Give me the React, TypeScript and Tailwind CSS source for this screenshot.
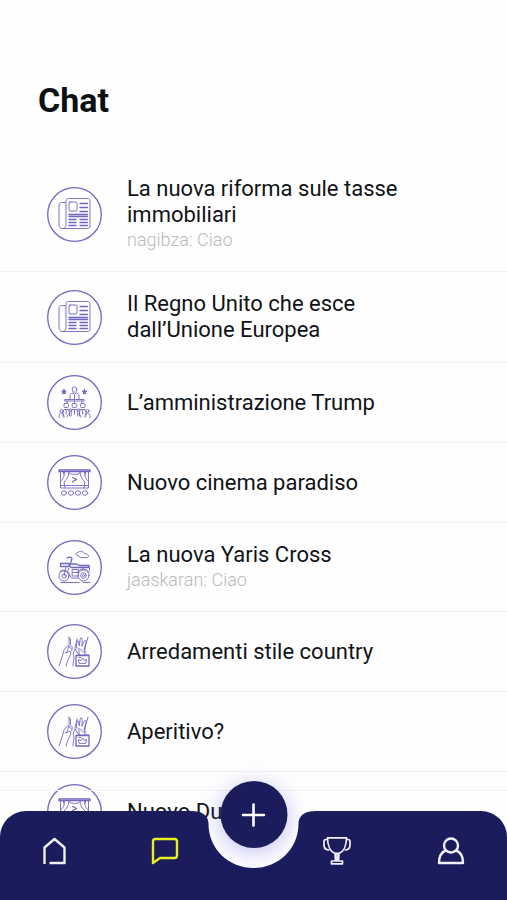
import type { ReactNode } from "react";

const NewspaperIcon = () => (
  <>
    <path d="M19 14.500c0-2 1-3 2.500-3h19c1.500 0 2.500 1 2.500 2.500v25c0 1.500-1 2.500-2.500 2.500h-25c-2 0-3.500-1.500-3.500-3.500V18c0-1.500 1-2.500 2.500-2.500H19V38c0 2-1.500 3.500-3.500 3.500" />
    <rect x="22" y="15" width="8" height="9" rx="1" />
    <path strokeWidth="1.300" d="M33 16.500h7.500M33 20.500h7.500M33 24.500h7.500M22 32.500h7M33 32.500h7.500M22 35.500h7M33 35.500h7.500M22 38.500h7M33 38.500h7.500" />
    <path strokeWidth="1.500" d="M22 27.500h18.500M22 29.500h18.500" />
  </>
);

const SpeakerIcon = () => (
  <>
    <path fill="currentColor" d="m17 14.500.7 1.500 1.600.2-1.200 1.100.3 1.700-1.400-.8-1.400.8.3-1.700-1.200-1.100 1.600-.2zM37.500 14.500l.7 1.500 1.600.2-1.200 1.100.3 1.700-1.400-.8-1.400.8.3-1.700-1.200-1.100 1.600-.2z" />
    <ellipse cx="27.500" cy="14.500" rx="2.300" ry="2.800" />
    <path d="M23 24v-3c0-2 1.500-3 3-3l1.500 1.500L29 18c1.500 0 3 1 3 3v3M27.500 20v4M18 24.500h19v1.500H18zM20 26v2.500M27.500 26v2.500M35 26v2.500" />
    <rect x="17" y="28.500" width="4.500" height="4" rx="1" />
    <rect x="25.200" y="28.500" width="4.500" height="4" rx="1" />
    <rect x="33.500" y="28.500" width="4.500" height="4" rx="1" />
    <path d="M16 41v-4l1-2.500h4.500l1 2.500v4M24.200 41v-4l1-2.500h4.500l1 2.500v4M32.500 41v-4l1-2.500H38l1 2.500v4M19.200 35v4M27.500 35v4M35.700 35v4" />
    <circle cx="14.500" cy="36" r="1.500" />
    <circle cx="23.300" cy="35" r="1.200" />
    <circle cx="31.600" cy="35" r="1.200" />
    <circle cx="40.500" cy="36" r="1.500" />
    <path d="M12 42.500c0-3 1-4.500 2.500-4.500s2.500 1.500 2.500 4.500M38 42.500c0-3 1-4.500 2.500-4.500s2.500 1.500 2.500 4.500M20 42c.5-2 1-3 2.300-3M34 42c-.5-2-1-3-2.300-3" />
  </>
);

const CinemaIcon = () => (
  <>
    <path strokeWidth="1.300" d="M12 15h31v1.700H12z" />
    <path d="M13.500 17v16h28V17M13.500 30.500h28M16.500 17v2M38.500 17v2" />
    <path d="M22 17c0 5-3 8-5 10l1 6M17.500 17c0 5-1.500 7-4 9.500M33 17c0 5 3 8 5 10l-1 6M37.500 17c0 5 1.500 7 4 9.500M22 18c2 2 9 2 11 0" />
    <path strokeWidth="1.300" d="m25.500 22.500 4 2-4 2.200" />
    <ellipse cx="17" cy="38" rx="2.600" ry="2.200" />
    <ellipse cx="24" cy="38" rx="2.600" ry="2.200" />
    <ellipse cx="31" cy="38" rx="2.600" ry="2.200" />
    <ellipse cx="38" cy="38" rx="2.600" ry="2.200" />
  </>
);

const MotorbikeIcon = () => (
  <>
    <path d="M31 15.500c-3 0-3-3 0-3 2-2 5-1.500 6 .5 1 1 4 1 4.500 2.500.3 1-.5 2-1.500 2h-6c-1.500 0-2-1-3-2z" />
    <path strokeWidth="1.300" d="M20 18c2-1.200 4.500-1.500 5 .5l-1.500 5M13.500 23.500h8.500v3h-8.500zM22 24h7c1.500 0 2 1.500 4 1.500h9v2H24z" />
    <path d="M19 26.500 17 36M22 28l-1.500 4 4 6h7M25.500 29.500h6v6.500h-6zM25.500 32.500h6M36 27.500v2M42.500 27.500v3M12.500 32c1-3 7-3 10 2M30.500 32c2-4 10-4 12 1" />
    <circle cx="17" cy="36" r="5" />
    <circle cx="17" cy="36" r="2.200" />
    <circle cx="36.500" cy="35.500" r="5.500" />
    <circle cx="36.500" cy="35.500" r="2.800" />
    <circle cx="36.500" cy="35.500" r="1" />
    <path d="M14 42.500h18M36 42.500h7" />
  </>
);

const ToastIcon = () => (
  <>
    <path d="M22 13v9.500M20.500 22c-2 2-4.500 4-4.500 8l-4 12M24.500 25l-3-3c0 4-2 6-3 7l5-2c2-1 2.500-3 1-5M24 28c0 4-4 8-5 14M22 14l1.500 1v6" />
    <path d="M29 25l1-7c0-2 1.500-2 1.800 0l.4 4 1-7c.4-1.800 2-1.500 2 .3l-.3 7 2.200-5c1-1.500 2.500-.7 2 1L37 26M41 13l-2.500 9M38.500 22l-1 6M30 15l-2 9M31 24c2 1 4 2 5 4" />
    <path d="M26 42l1-9c-1-2-1-5 1-8l4 6h10M32 26v5M38 27v4" />
    <path strokeWidth="1.300" d="M29 31.500h13v10.500H29z" />
    <path d="m32 39-.5-3.500 2.500 1 2-2.500 1.500 2.500 2-1-.5 3.500zM32 33.500h2" />
  </>
);

type Chat = { title: string; preview?: string; icon: ReactNode };

const chats: Chat[] = [
  { title: "La nuova riforma sule tasse immobiliari", preview: "nagibza: Ciao", icon: <NewspaperIcon /> },
  { title: "Il Regno Unito che esce dall’Unione Europea", icon: <NewspaperIcon /> },
  { title: "L’amministrazione Trump", icon: <SpeakerIcon /> },
  { title: "Nuovo cinema paradiso", icon: <CinemaIcon /> },
  { title: "La nuova Yaris Cross", preview: "jaaskaran: Ciao", icon: <MotorbikeIcon /> },
  { title: "Arredamenti stile country", icon: <ToastIcon /> },
  { title: "Aperitivo?", icon: <ToastIcon /> },
  { title: "Nuovo Du", icon: <CinemaIcon /> },
];

const ChatRow = ({ title, preview, icon }: Chat) => (
  <li className="border-b border-[#f3f3f5] last:border-b-0">
    <a href="#" className="flex min-h-[79px] items-center gap-[25px] pl-[47px] pr-20">
      <svg
        viewBox="0 0 55 55"
        className="w-[55px] h-[55px] shrink-0 text-[#7067bf]"
        fill="none"
        stroke="currentColor"
        strokeWidth="0.900"
        strokeLinecap="round"
        strokeLinejoin="round"
        aria-hidden="true"
      >
        <circle cx="27.500" cy="27.500" r="26.800" strokeWidth="1.300" />
        {icon}
      </svg>
      <div className="py-[19px]">
        <h2 className="text-[22px] leading-[26px] text-[#101418]">{title}</h2>
        {preview && <p className="text-lg leading-6 font-light text-[#b9b9bb]">{preview}</p>}
      </div>
    </a>
  </li>
);

const NavButton = ({ label, active, children }: { label: string; active?: boolean; children: ReactNode }) => (
  <button type="button" aria-label={label} className={active ? "text-[#e9f01d]" : "text-[#f1f0fb]"}>
    <svg viewBox="0 0 28 28" className="w-7 h-7" fill="none" stroke="currentColor" strokeWidth="2.400" strokeLinejoin="round">
      {children}
    </svg>
  </button>
);

const BottomNav = () => (
  <nav className="fixed inset-x-0 bottom-0 border-t border-[#f3f3f5] pt-5">
    {/* bar with the notch for the add button */}
    <div className="absolute inset-x-0 bottom-0 top-5 flex text-[#1b1c5c]">
      <div className="flex-1 rounded-tl-[26px] bg-current" />
      <svg viewBox="0 0 131 89" className="w-[131px] h-[89px]" fill="currentColor" aria-hidden="true">
        <path d="M0 0H3C14 0 20.500 4 20.500 13C20.500 38 41 57 65.500 57S110.500 38 110.500 13C110.500 4 117 0 128 0H131V89H0Z" />
      </svg>
      <div className="flex-1 rounded-tr-[26px] bg-current" />
    </div>

    <button
      type="button"
      aria-label="Nuova chat"
      className="absolute left-1/2 -top-[10px] flex h-[67px] w-[67px] -translate-x-1/2 items-center justify-center rounded-full bg-[#1b1c5c] text-white shadow-[0_4px_22px_rgba(90,80,220,0.36)]"
    >
      <svg viewBox="0 0 24 24" className="w-6 h-6" stroke="currentColor" strokeWidth="2.600" strokeLinecap="round">
        <path d="M12 1.500v21M1.500 12h21" />
      </svg>
    </button>

    <div className="relative flex h-[89px] justify-between pl-10 pr-[42px] pt-[26px] pointer-events-none">
      <div className="flex items-start gap-[83px] pointer-events-auto">
        <NavButton label="Home">
          <path d="M4.500 27V10.500L14.500 2l10 8.500V26H9.500" />
        </NavButton>
        <NavButton label="Chat" active>
          <path d="M2 26V4.500C2 3 3 2 4.500 2h19C25 2 26 3 26 4.500v14c0 1.500-1 2.500-2.500 2.500H9z" />
        </NavButton>
      </div>
      <div className="flex items-start gap-[86px] pointer-events-auto">
        <NavButton label="Classifica">
          <g strokeWidth="1.700">
            <path d="M4.500.8h19c0 8-3 14-7.500 15.500h-4C7.500 14.800 4.500 8.800 4.500.8zM12 16.500l.5 7.500M16 16.500l-.5 7.500M14 16.500V24M8.500 24h11v2.800h-11z" />
            <path d="M5 2.500H3C1.500 2.500 1 3 1 4.500V8c0 3 2 5 5.500 5M23 2.500h2c1.500 0 2 .5 2 2V8c0 3-2 5-5.500 5" />
          </g>
        </NavButton>
        <NavButton label="Profilo">
          <circle cx="14" cy="8.500" r="7" />
          <path d="M9 13.500c-4.500 1.500-7 5-7 12.500h24c0-7.500-2.500-11-7-12.500" />
        </NavButton>
      </div>
    </div>
  </nav>
);

export default function App() {
  return (
    <main className="min-h-screen bg-[#fefefe] pb-12 font-['Roboto',sans-serif]">
      <h1 className="pl-[38px] pt-20 text-[34px] leading-10 font-bold text-[#0b1014]">Chat</h1>
      <ul className="pt-[37px]">
        {chats.map((chat) => (
          <ChatRow key={chat.title} {...chat} />
        ))}
      </ul>
      <BottomNav />
    </main>
  );
}
